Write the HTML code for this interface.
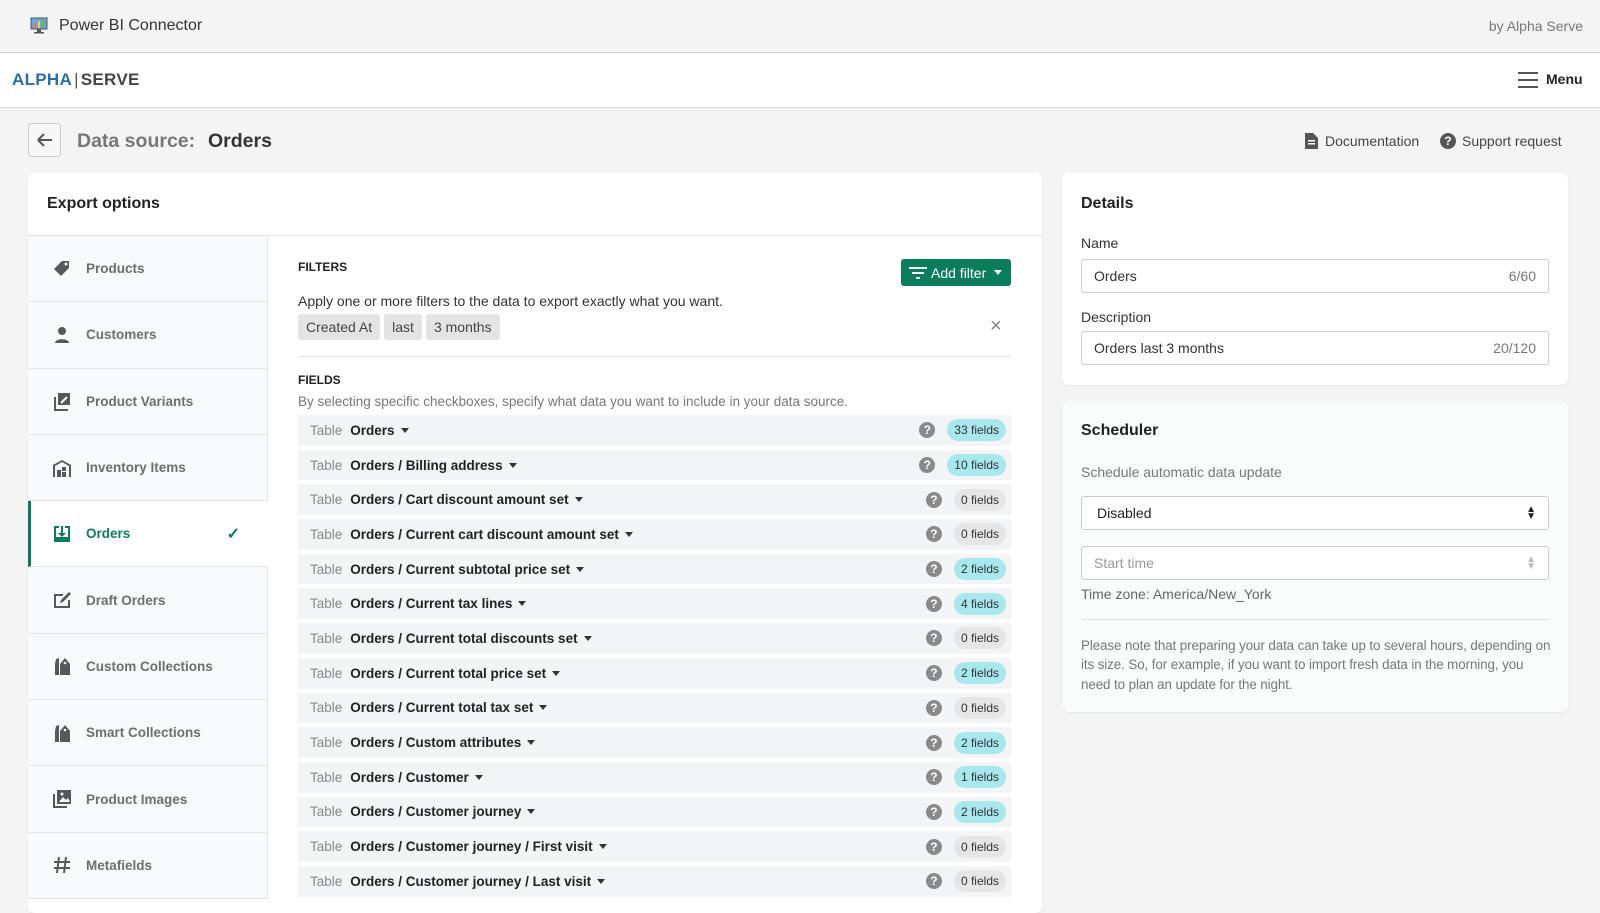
<!DOCTYPE html>
<html><head><meta charset="utf-8"><style>
*{box-sizing:border-box;margin:0;padding:0}
body{width:1600px;height:900px;overflow:hidden;background:#f4f4f4;font-family:"Liberation Sans",Arial,sans-serif;color:#333;position:relative}
.abs{position:absolute}
.top{left:0;top:0;width:1600px;height:53px;background:#f4f4f4;border-bottom:1px solid #d0d0d0}
.nav{left:0;top:53px;width:1600px;height:55px;background:#fff;border-bottom:1px solid #ddd}
.card{background:#fff;border-radius:7px;box-shadow:0 1px 2px rgba(0,0,0,.06)}
.side{left:28px;top:236px;width:240px}
.si{height:66.3px;border-bottom:1px solid #e4e4e4;border-right:1px solid #e4e4e4;background:#f9fafb;display:flex;align-items:center;padding-left:24px;font-weight:bold;font-size:13.5px;color:#6b6e72}
.si svg{width:20px;height:20px;margin-right:14px;fill:#55585c}
.si.act{background:#fff;border-left:3px solid #0b7d5c;border-right:none;color:#0b7d5c;padding-left:21px}
.row{height:30.7px;margin-bottom:4px;background:#f3f4f6;display:flex;align-items:center;padding-left:12px;font-size:13.5px;padding-right:5px}
.row .t{color:#888;margin-right:8px}
.row b{color:#222}
.caret{display:inline-block;width:0;height:0;border-left:4.5px solid transparent;border-right:4.5px solid transparent;border-top:5px solid #333;margin-left:6px;vertical-align:middle}
.q{margin-left:auto;width:16px;height:16px;border-radius:50%;background:#8a8a8a;color:#fff;font-size:12px;font-weight:bold;text-align:center;line-height:16px;margin-right:12px}
.bd{font-size:12px;padding:0 7px;height:22px;line-height:22px;border-radius:11px;background:#e6e6e6;color:#333}
.bd.b{background:#a9e7ee}
.chip{background:#e4e4e4;border-radius:3px;font-size:14px;padding:0 8px;height:26px;line-height:26px;display:inline-block;color:#444;margin-right:4px}
.inp{border:1px solid #ccc;border-radius:3px;height:34px;display:flex;align-items:center;padding:0 12px;font-size:14px;background:#fff}
</style></head><body>
<div class="abs top">
 <svg class="abs" style="left:30px;top:17px" width="18" height="17" viewBox="0 0 18 17"><rect x="1" y="1" width="16" height="11" fill="#6aa7d8" stroke="#555"/><rect x="4" y="6" width="2" height="5" fill="#e74"/><rect x="8" y="4" width="2" height="7" fill="#fc3"/><rect x="12" y="3" width="2" height="8" fill="#5b5"/><rect x="7" y="12" width="4" height="3" fill="#555"/><rect x="4" y="15" width="10" height="1.5" fill="#555"/></svg>
 <div class="abs" style="left:59px;top:17px;font-size:16px;color:#333">Power BI Connector</div>
 <div class="abs" style="right:17px;top:18px;font-size:14px;color:#777">by Alpha Serve</div>
</div>
<div class="abs nav">
 <div class="abs" style="left:12px;top:17px;font-size:17px;font-weight:bold;letter-spacing:.3px"><span style="color:#2a6ea8">ALPHA</span><span style="color:#555;font-weight:normal;margin:0 2px">|</span><span style="color:#444">SERVE</span></div>
 <svg class="abs" style="left:1518px;top:19px" width="20" height="16"><rect y="0" width="20" height="2" fill="#555"/><rect y="7" width="20" height="2" fill="#555"/><rect y="14" width="20" height="2" fill="#555"/></svg>
 <div class="abs" style="left:1546px;top:18px;font-size:14px;font-weight:bold;color:#222">Menu</div>
</div>
<div class="abs" style="left:28px;top:123px;width:33px;height:34px;border:1px solid #ccc;border-radius:3px;background:#f7f7f7">
 <svg width="31" height="32" viewBox="0 0 31 32"><path d="M9 16h14M9 16l6-6M9 16l6 6" stroke="#555" stroke-width="2" fill="none"/></svg>
</div>
<div class="abs" style="left:77px;top:130px;font-size:19.5px;font-weight:bold;color:#777">Data source:</div>
<div class="abs" style="left:208px;top:130px;font-size:19.5px;font-weight:bold;color:#333">Orders</div>
<svg class="abs" style="left:1305px;top:133px" width="13" height="16" viewBox="0 0 13 16"><path d="M0 0h8l5 5v11H0z" fill="#555"/><rect x="3" y="7" width="7" height="1.5" fill="#fff"/><rect x="3" y="10" width="7" height="1.5" fill="#fff"/></svg>
<div class="abs" style="left:1325px;top:133px;font-size:14px;color:#444">Documentation</div>
<div class="abs" style="left:1440px;top:133px;width:16px;height:16px;border-radius:50%;background:#555;color:#fff;font-size:12px;font-weight:bold;text-align:center;line-height:16px">?</div>
<div class="abs" style="left:1462px;top:133px;font-size:14px;color:#444">Support request</div>

<div class="abs card" style="left:28px;top:173px;width:1014px;height:740px">
 <div style="height:63px;border-bottom:1px solid #e4e4e4;padding:22px 0 0 19px;font-size:16px;font-weight:bold;color:#222">Export options</div>
</div>
<div class="abs side">
 <div class="si"><svg viewBox="0 0 20 20"><path d="M2 10L10 2h7v7l-8 8z"/><circle cx="14" cy="5" r="1.5" fill="#f9fafb"/></svg>Products</div>
 <div class="si"><svg viewBox="0 0 20 20"><circle cx="10" cy="6" r="4"/><path d="M3 18c0-5 14-5 14 0z"/></svg>Customers</div>
 <div class="si"><svg viewBox="0 0 20 20"><path d="M6 2h12v12H6z"/><path d="M2 6h2v12h12v2H2z"/><path d="M9 12l6-6" stroke="#f9fafb" stroke-width="2"/></svg>Product Variants</div>
 <div class="si"><svg viewBox="0 0 20 20"><path d="M1 7l9-5 9 5v12h-2V8l-7-4-7 4v11H1z"/><rect x="5" y="12" width="4" height="7"/><rect x="10" y="9" width="4" height="4"/><rect x="10" y="14" width="4" height="5"/></svg>Inventory Items</div>
 <div class="si act"><svg viewBox="0 0 20 20" style="fill:#0b7d5c"><path d="M2 2h5v2H4v9h12V4h-3V2h5v16H2z"/><path d="M9 2h2v7h3l-4 4-4-4h3z"/></svg>Orders<span style="margin-left:auto;margin-right:28px;font-size:16px">✓</span></div>
 <div class="si"><svg viewBox="0 0 20 20"><path d="M2 4h9v2H4v10h12V10h2v8H2z"/><path d="M8 13l1-3 8-8 2 2-8 8z"/></svg>Draft Orders</div>
 <div class="si"><svg viewBox="0 0 20 20"><path d="M4 3l3-1v17H3V8z"/><path d="M8 8l5-6 5 6v11H8z"/><circle cx="13" cy="7" r="1.3" fill="#f9fafb"/></svg>Custom Collections</div>
 <div class="si"><svg viewBox="0 0 20 20"><path d="M4 3l3-1v17H3V8z"/><path d="M8 8l5-6 5 6v11H8z"/><circle cx="13" cy="7" r="1.3" fill="#f9fafb"/></svg>Smart Collections</div>
 <div class="si"><svg viewBox="0 0 20 20"><path d="M5 1h14v14H5z"/><path d="M1 5h2v12h12v2H1z"/><path d="M7 13l4-5 3 3 2-2 2 4z" fill="#f9fafb"/><circle cx="10" cy="5" r="1.5" fill="#f9fafb"/></svg>Product Images</div>
 <div class="si"><svg viewBox="0 0 20 20"><path d="M7 2L5 18M14 2l-2 16M2 7h16M2 13h16" stroke="#55585c" stroke-width="2" fill="none"/></svg>Metafields</div>
</div>

<div class="abs" style="left:298px;top:260px;font-size:12px;font-weight:bold;color:#222">FILTERS</div>
<div class="abs" style="left:901px;top:259px;width:110px;height:27px;background:#0b7d5c;border-radius:3px;color:#fff;font-size:14px;display:flex;align-items:center;padding-left:8px">
 <svg width="18" height="12" style="margin-right:4px"><rect x="0" y="0" width="18" height="2" fill="#fff"/><rect x="3" y="5" width="12" height="2" fill="#fff"/><rect x="7" y="10" width="4" height="2" fill="#fff"/></svg>Add filter<span class="caret" style="border-top-color:#fff;margin-left:8px"></span></div>
<div class="abs" style="left:298px;top:293px;font-size:14px;color:#333">Apply one or more filters to the data to export exactly what you want.</div>
<div class="abs" style="left:298px;top:314px"><span class="chip">Created At</span><span class="chip">last</span><span class="chip">3 months</span></div>
<div class="abs" style="left:990px;top:315px;font-size:20px;color:#888">×</div>
<div class="abs" style="left:298px;top:356px;width:713px;height:1px;background:#e2e2e2"></div>
<div class="abs" style="left:298px;top:373px;font-size:12px;font-weight:bold;color:#222">FIELDS</div>
<div class="abs" style="left:298px;top:394px;font-size:13.5px;color:#777">By selecting specific checkboxes, specify what data you want to include in your data source.</div>

<div class="abs" style="left:298px;top:415px;width:713px">
 <div class="row"><span class="t">Table</span><b>Orders</b><span class="caret"></span><span class="q">?</span><span class="bd b">33 fields</span></div>
 <div class="row"><span class="t">Table</span><b>Orders / Billing address</b><span class="caret"></span><span class="q">?</span><span class="bd b">10 fields</span></div>
 <div class="row"><span class="t">Table</span><b>Orders / Cart discount amount set</b><span class="caret"></span><span class="q">?</span><span class="bd">0 fields</span></div>
 <div class="row"><span class="t">Table</span><b>Orders / Current cart discount amount set</b><span class="caret"></span><span class="q">?</span><span class="bd">0 fields</span></div>
 <div class="row"><span class="t">Table</span><b>Orders / Current subtotal price set</b><span class="caret"></span><span class="q">?</span><span class="bd b">2 fields</span></div>
 <div class="row"><span class="t">Table</span><b>Orders / Current tax lines</b><span class="caret"></span><span class="q">?</span><span class="bd b">4 fields</span></div>
 <div class="row"><span class="t">Table</span><b>Orders / Current total discounts set</b><span class="caret"></span><span class="q">?</span><span class="bd">0 fields</span></div>
 <div class="row"><span class="t">Table</span><b>Orders / Current total price set</b><span class="caret"></span><span class="q">?</span><span class="bd b">2 fields</span></div>
 <div class="row"><span class="t">Table</span><b>Orders / Current total tax set</b><span class="caret"></span><span class="q">?</span><span class="bd">0 fields</span></div>
 <div class="row"><span class="t">Table</span><b>Orders / Custom attributes</b><span class="caret"></span><span class="q">?</span><span class="bd b">2 fields</span></div>
 <div class="row"><span class="t">Table</span><b>Orders / Customer</b><span class="caret"></span><span class="q">?</span><span class="bd b">1 fields</span></div>
 <div class="row"><span class="t">Table</span><b>Orders / Customer journey</b><span class="caret"></span><span class="q">?</span><span class="bd b">2 fields</span></div>
 <div class="row"><span class="t">Table</span><b>Orders / Customer journey / First visit</b><span class="caret"></span><span class="q">?</span><span class="bd">0 fields</span></div>
 <div class="row"><span class="t">Table</span><b>Orders / Customer journey / Last visit</b><span class="caret"></span><span class="q">?</span><span class="bd">0 fields</span></div>
</div>

<div class="abs card" style="left:1062px;top:173px;width:506px;height:212px;padding:22px 19px 0">
 <div style="font-size:16px;font-weight:bold;color:#222">Details</div>
 <div style="font-size:14px;margin-top:22px">Name</div>
 <div class="inp" style="margin-top:8px">Orders<span style="margin-left:auto;color:#777">6/60</span></div>
 <div style="font-size:14px;margin-top:16px">Description</div>
 <div class="inp" style="margin-top:6px">Orders last 3 months<span style="margin-left:auto;color:#777">20/120</span></div>
</div>
<div class="abs card" style="left:1062px;top:401px;width:506px;height:311px;padding:21px 19px 0;background:#fafbfb">
 <div style="font-size:16px;font-weight:bold;color:#222">Scheduler</div>
 <div style="font-size:14px;margin-top:24px;color:#777">Schedule automatic data update</div>
 <div class="inp" style="margin-top:16px;padding-left:15px;color:#222">Disabled<span style="margin-left:auto;font-size:10px;line-height:7px;text-align:center">▲<br>▼</span></div>
 <div class="inp" style="margin-top:16px;color:#999">Start time<span style="margin-left:auto;font-size:10px;line-height:7px;color:#bbb">▲<br>▼</span></div>
 <div style="font-size:14px;color:#666;margin-top:6px">Time zone: America/New_York</div>
 <div style="height:1px;background:#e2e2e2;margin-top:17px"></div>
 <div style="font-size:13.4px;color:#777;line-height:19.4px;margin-top:16px;margin-right:-4px;letter-spacing:-.1px">Please note that preparing your data can take up to several hours, depending on its size. So, for example, if you want to import fresh data in the morning, you need to plan an update for the night.</div>
</div>
</body></html>
